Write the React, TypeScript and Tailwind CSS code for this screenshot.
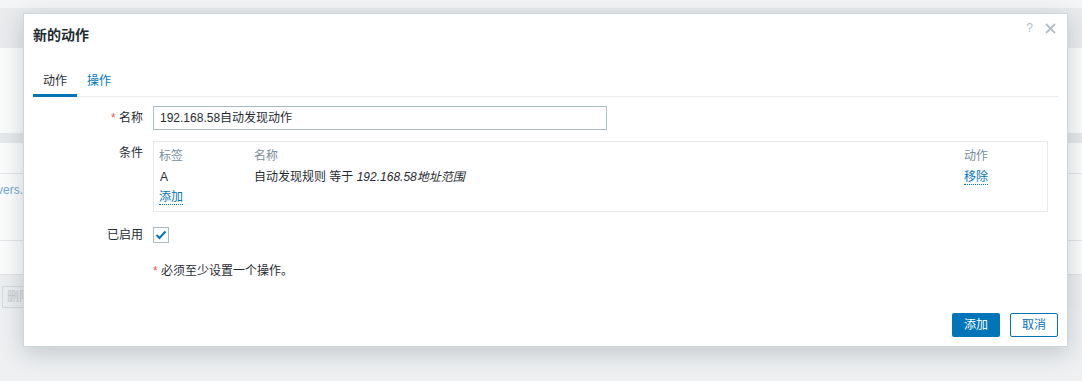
export default function App() {
  return (
    <div className="relative w-[1082px] h-[381px] overflow-hidden bg-[#eef0f2] font-['Liberation_Sans','Noto_Sans_CJK_SC',sans-serif] text-[12px] text-[#1f2c33]">
      {/* page behind the dialog */}
      <div className="flex flex-col">
        <div className="h-[8px] bg-[#f4f5f6]" />
        <div className="h-[40px] bg-[#e9ebed]" />
        <div className="h-[85px] bg-[#fafbfb]" />
        <div className="h-[10px] bg-[#e5e8ea]" />
        <div className="h-[31px] bg-[#fafbfb] border-b border-[#e3e6e8]" />
        <div className="h-[67px] bg-[#fafbfb] border-b border-[#e3e6e8] pt-[9px]">
          <div className="w-[23px] overflow-hidden flex justify-end">
            <span className="whitespace-nowrap text-[#6fa9d3] leading-[14px]">servers.</span>
          </div>
        </div>
        <div className="h-[33px] bg-[#fafbfb]" />
        <div className="h-[35px] bg-[#eceef0] border-t border-[#e1e4e6] pt-[11px] pl-[2px]">
          <div className="w-[40px] h-[22px] border border-[#d3d8db] text-[#c4cace] leading-[20px] pl-[4px]">删除</div>
        </div>
      </div>

      {/* dialog */}
      <div className="absolute left-[23px] top-[13px] w-[1045px] h-[334px] bg-white border border-[#cfd6da] shadow-[0_6px_22px_rgba(40,50,60,0.22)] flex flex-col px-[9px]">
        {/* header */}
        <div className="h-[48px] flex justify-between">
          <h4 className="pt-[13px] text-[14px] leading-[16px] font-bold text-[#1f2c33]">新的动作</h4>
          <div className="flex items-start gap-[12px] pt-[8px] pr-[2px]">
            <span className="text-[12px] leading-[12px] text-[#b4bec4]">?</span>
            <svg width="11" height="11" viewBox="0 0 11 11" className="mt-[1px]">
              <path d="M1 1 L10 10 M10 1 L1 10" stroke="#b4bec4" strokeWidth="1.8" />
            </svg>
          </div>
        </div>

        {/* tabs */}
        <div className="flex border-b border-[#ebeef0]">
          <div className="px-[10px] pt-[12px] pb-[6px] leading-[14px] border-b-[3px] border-[#0275b8] -mb-px text-[#1f2c33]">动作</div>
          <div className="px-[10px] pt-[12px] pb-[6px] leading-[14px] text-[#0275b8]">操作</div>
        </div>

        {/* form */}
        <div className="flex flex-col pt-[9px]">
          {/* name */}
          <div className="flex items-center">
            <div className="w-[110px] shrink-0 text-right leading-[14px]">
              <span className="text-[#e45959]">*</span> 名称
            </div>
            <div className="ml-[10px] w-[454px] h-[24px] border border-[#acbac2] px-[6px] flex items-center leading-[14px]">
              192.168.58自动发现动作
            </div>
          </div>

          {/* conditions */}
          <div className="flex mt-[11px]">
            <div className="w-[110px] shrink-0 text-right leading-[14px] pt-[5px]">条件</div>
            <div className="ml-[10px] w-[895px] border border-[#e6e9eb] pt-[3px] pb-[3px] px-[5px] flex flex-col">
              <div className="flex h-[21px] items-center text-[#768d99] leading-[14px]">
                <div className="w-[95px]">标签</div>
                <div className="flex-1">名称</div>
                <div className="w-[78px]">动作</div>
              </div>
              <div className="flex h-[21px] items-center leading-[14px]">
                <div className="w-[95px] pl-[1px]">A</div>
                <div className="flex-1">
                  自动发现规则 等于 <span className="italic">192.168.58地址范围</span>
                </div>
                <div className="w-[78px]">
                  <span className="text-[#0275b8] border-b border-dotted border-[#0275b8]">移除</span>
                </div>
              </div>
              <div className="flex h-[21px] items-center leading-[14px]">
                <span className="text-[#0275b8] border-b border-dotted border-[#0275b8]">添加</span>
              </div>
            </div>
          </div>

          {/* enabled */}
          <div className="flex items-center mt-[15px]">
            <div className="w-[110px] shrink-0 text-right leading-[14px]">已启用</div>
            <div className="ml-[10px] w-[16px] h-[16px] border border-[#acbac2] flex items-center justify-center">
              <svg width="12" height="10" viewBox="0 0 12 10">
                <path d="M1.5 5 L4.5 8 L10.5 1.5" fill="none" stroke="#0275b8" strokeWidth="2" />
              </svg>
            </div>
          </div>

          {/* note */}
          <div className="flex mt-[21px]">
            <div className="w-[110px] shrink-0" />
            <div className="ml-[10px] leading-[14px]">
              <span className="text-[#e45959]">*</span> 必须至少设置一个操作。
            </div>
          </div>
        </div>

        {/* footer */}
        <div className="mt-auto pb-[9px] flex justify-end gap-[10px]">
          <button className="w-[48px] h-[24px] bg-[#0275b8] text-white rounded-[2px] leading-[14px]">添加</button>
          <button className="w-[48px] h-[24px] border border-[#0275b8] text-[#0275b8] rounded-[2px] bg-white leading-[14px]">取消</button>
        </div>
      </div>
    </div>
  );
}
